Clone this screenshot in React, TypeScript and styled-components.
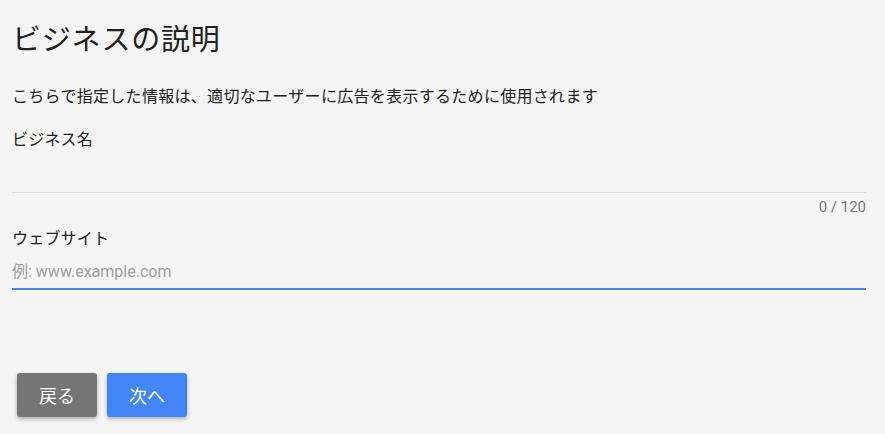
import React, { useState } from "react";
import styled, { createGlobalStyle } from "styled-components";

const GlobalStyle = createGlobalStyle`
  html, body {
    margin: 0;
    padding: 0;
    background: #f5f5f5;
  }
  body {
    font-family: Roboto, "Noto Sans CJK JP", sans-serif;
    color: #212121;
  }
`;

const App = () => {
  const [name, setName] = useState("");
  const [site, setSite] = useState("");

  return (
    <Page>
      <GlobalStyle />
      <Title>ビジネスの説明</Title>
      <Description>
        こちらで指定した情報は、適切なユーザーに広告を表示するために使用されます
      </Description>

      <Field>
        <Label>ビジネス名</Label>
        <Input value={name} maxLength={120} onChange={(e) => setName(e.target.value)} />
        <Counter>{name.length} / 120</Counter>
      </Field>

      <Field>
        <Label>ウェブサイト</Label>
        <Input
          focused
          value={site}
          placeholder="例: www.example.com"
          onChange={(e) => setSite(e.target.value)}
        />
      </Field>

      <Actions>
        <Button>戻る</Button>
        <Button primary>次へ</Button>
      </Actions>
    </Page>
  );
};

const Page = styled.div`
  padding: 18px 19px 0 12px;
  height: 434px;
  box-sizing: border-box;
`;

const Title = styled.h1`
  margin: 0;
  font-size: 29px;
  font-weight: 400;
  letter-spacing: 0.8px;
  line-height: 44px;
  color: #212121;
`;

const Description = styled.p`
  margin: 23px 0 0;
  font-size: 16px;
  letter-spacing: 0.3px;
  line-height: 24px;
  color: #212121;
`;

const Field = styled.div`
  display: flex;
  flex-direction: column;
  margin-top: 19px;

  & + & {
    margin-top: 11px;
  }
`;

const Label = styled.label`
  font-size: 16px;
  line-height: 24px;
  letter-spacing: 0.2px;
  color: #212121;
`;

interface InputProps {
  readonly focused?: boolean;
}

const Input = styled.input<InputProps>`
  border: none;
  outline: none;
  background: transparent;
  font-family: Roboto, "Noto Sans CJK JP", sans-serif;
  font-size: 16px;
  color: #212121;
  padding: 0;
  margin-top: ${(props) => (props.focused ? "3px" : "12px")};
  height: ${(props) => (props.focused ? "34px" : "28px")};
  border-bottom: ${(props) => (props.focused ? "2px solid #4a86e8" : "1px solid #dcdcdc")};

  &::placeholder {
    color: #9e9e9e;
  }
`;

const Counter = styled.div`
  align-self: flex-end;
  margin-top: 5px;
  font-size: 15px;
  line-height: 18px;
  color: #757575;
`;

const Actions = styled.div`
  display: flex;
  gap: 10px;
  margin-top: 83px;
  padding-left: 5px;
`;

interface ButtonProps {
  readonly primary?: boolean;
}

const Button = styled.button<ButtonProps>`
  width: 80px;
  height: 44px;
  border: none;
  border-radius: 3px;
  font-family: Roboto, "Noto Sans CJK JP", sans-serif;
  font-size: 18px;
  color: #fff;
  cursor: pointer;
  background: ${(props) => (props.primary ? "#4285f4" : "#757575")};
  box-shadow: 0 2px 4px rgba(0, 0, 0, 0.3);
`;

export default App;
